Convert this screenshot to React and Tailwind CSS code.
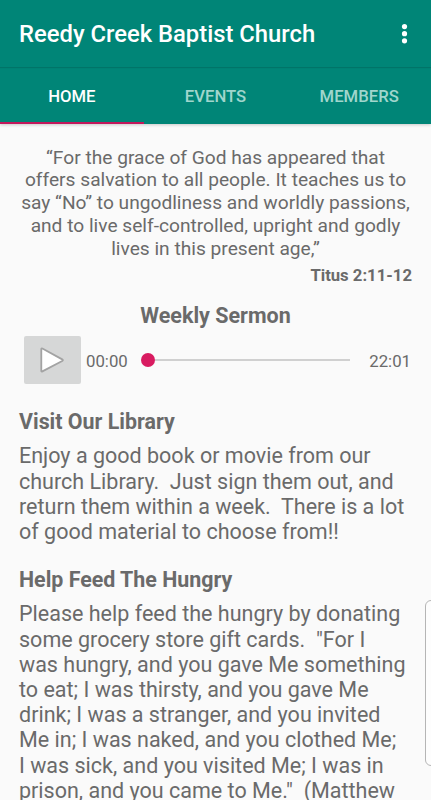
import React from 'react';

const tabs = [
  { label: 'HOME', active: true },
  { label: 'EVENTS', active: false },
  { label: 'MEMBERS', active: false },
];

const verse = [
  '“For the grace of God has appeared that',
  'offers salvation to all people. It teaches us to',
  'say “No” to ungodliness and worldly passions,',
  'and to live self-controlled, upright and godly',
  'lives in this present age,”',
];

const announcements = [
  {
    title: 'Visit Our Library',
    lines: [
      'Enjoy a good book or movie from our',
      'church Library.  Just sign them out, and',
      'return them within a week.  There is a lot',
      'of good material to choose from!!',
    ],
  },
  {
    title: 'Help Feed The Hungry',
    lines: [
      'Please help feed the hungry by donating',
      'some grocery store gift cards.  "For I',
      'was hungry, and you gave Me something',
      'to eat; I was thirsty, and you gave Me',
      'drink; I was a stranger, and you invited',
      'Me in; I was naked, and you clothed Me;',
      'I was sick, and you visited Me; I was in',
      'prison, and you came to Me."  (Matthew',
    ],
  },
];

function AppBar() {
  return (
    <header className="h-[124px] bg-[#008577] shadow-[0_1px_3px_rgba(0,0,0,0.2)]">
      <div className="flex h-[67px] items-center justify-between pl-[19px] pr-[23px] shadow-[0_1px_1px_rgba(0,0,0,0.12)]">
        <h1 className="text-[23.8px] font-medium leading-7 text-white">Reedy Creek Baptist Church</h1>
        <button aria-label="More options">
          <svg width="7" height="20" viewBox="0 0 7 20" fill="#fff">
            <circle cx="3.5" cy="2.6" r="2.6" />
            <circle cx="3.5" cy="9.7" r="2.6" />
            <circle cx="3.5" cy="16.8" r="2.6" />
          </svg>
        </button>
      </div>

      {/* Tabs */}
      <nav className="grid h-[57px] grid-cols-3">
        {tabs.map((tab) => (
          <button
            key={tab.label}
            className={
              tab.active
                ? 'border-b-2 border-[#c2185b] pt-1 text-[16.7px] font-medium text-white'
                : 'border-b-2 border-transparent pt-1 text-[16.7px] font-medium text-[#a0d6cd]'
            }
          >
            {tab.label}
          </button>
        ))}
      </nav>
    </header>
  );
}

function Player() {
  return (
    <div className="flex h-12 items-center pl-[23.5px] pr-5">
      <button aria-label="Play" className="flex h-12 w-[57px] items-center justify-center rounded-xs bg-[#d6d7d7]">
        <svg width="26" height="28" viewBox="0 0 26 28">
          <path
            d="M2.3 3.2v21.6q0 1.2 1.1 .6L23.2 15q1.4-.8 0-1.6L3.4 2.5q-1.1-.5-1.1 .7Z"
            fill="#fff"
            stroke="#a3a3a3"
            strokeWidth="1.8"
          />
        </svg>
      </button>
      <span className="ml-[5.5px] w-[54.5px] pt-[3px] text-[16.8px]">00:00</span>
      <div className="flex w-[209.5px] items-center">
        <span className="size-3.5 rounded-full bg-[#d81b60]" />
        <span className="h-0.5 flex-1 bg-[#d0d0d0]" />
      </div>
      <span className="ml-auto pt-[3px] text-[16.8px]">22:01</span>
    </div>
  );
}

export default function App() {
  return (
    <div className="relative h-[800px] w-[431px] overflow-hidden bg-[#fafafa] font-[Roboto,sans-serif] text-[#6a6a6a]">
      <AppBar />

      <main>
        <div className="pt-[22.5px] text-center text-[19.17px] leading-[22.8px]">
          {verse.map((line) => (
            <p key={line} className="whitespace-pre">{line}</p>
          ))}
        </div>
        <p className="pr-[19px] pt-[5.5px] text-right text-[16.7px] font-bold leading-5">Titus 2:11-12</p>

        <h2 className="mt-[17px] text-center text-[21.5px] font-bold leading-[26px]">Weekly Sermon</h2>
        <div className="pt-[7px]">
          <Player />
        </div>

        <div className="flex flex-col gap-[23px] pl-[19px] pt-[25.5px]">
          {announcements.map((item) => (
            <section key={item.title}>
              <h3 className="text-[21.4px] font-bold leading-[26px]">{item.title}</h3>
              <div className="pt-2 text-[21.52px] leading-[25.2px]">
                {item.lines.map((line) => (
                  <p key={line} className="whitespace-pre">{line}</p>
                ))}
              </div>
            </section>
          ))}
        </div>
      </main>

      {/* Edge panel handle */}
      <div className="absolute -right-2 top-[600px] h-[166px] w-[14px] rounded-md border border-[#b5b5b5] bg-[#fdfdfd]" />
    </div>
  );
}
